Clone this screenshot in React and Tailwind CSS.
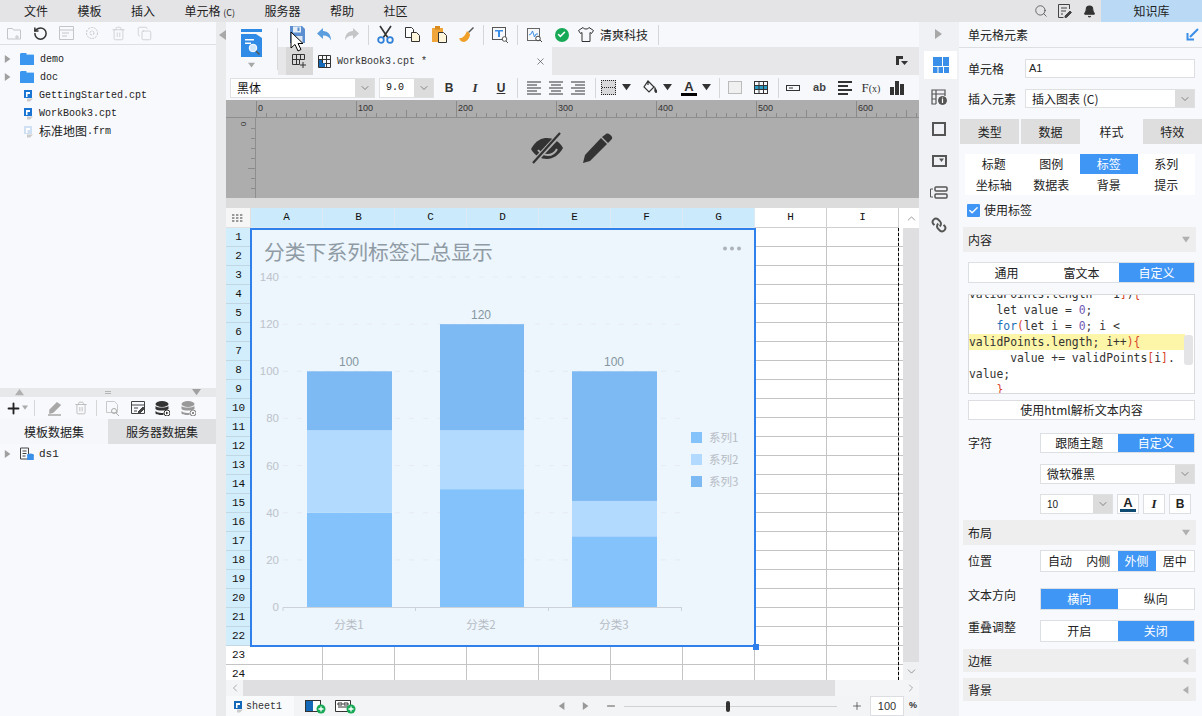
import { ChevronDown, ChevronLeft, ChevronRight, ChevronUp, Search, Bell, RotateCw, Plus, Minus, X, Trash2, Copy, Check } from 'lucide-react';

const MONO = "font-['Liberation_Mono',monospace]";

function Tri({ dir = 'down', color = '#9a9a9a', size = 6 }) {
  const pts = { down: '0,1 10,1 5,8', up: '0,8 10,8 5,1', left: '8,0 8,10 1,5', right: '1,0 1,10 8,5' };
  return (
    <svg width={size + 2} height={size + 2} viewBox="0 0 10 10" className="shrink-0">
      <polygon points={pts[dir]} fill={color} />
    </svg>
  );
}

function Sep({ h = 'h-[20px]' }) {
  return <div className={`w-px ${h} bg-[#d5d6d8] shrink-0`} />;
}

function Tool({ w = 'w-[27px]', children, className = '' }) {
  return <div className={`${w} h-full flex items-center justify-center shrink-0 ${className}`}>{children}</div>;
}

function Floppy() {
  return (
    <svg width="17" height="19" viewBox="0 0 17 19">
      <path d="M1 1h12l3 3v14H1z" fill="#5b8fd0" />
      <rect x="4" y="1.5" width="8" height="6" fill="#e8eef6" />
      <rect x="8.5" y="2.5" width="2" height="3.5" fill="#5b8fd0" />
      <rect x="3.5" y="11" width="10" height="7" fill="#dfe7f2" />
    </svg>
  );
}

function Undo({ flip, color }) {
  return (
    <svg width="17" height="15" viewBox="0 0 17 15" style={flip ? { transform: 'scaleX(-1)' } : undefined}>
      <path d="M7 1L1 6.5 7 12V8.5c4 0 6.5 1.5 8 5 0-6-3-9.5-8-9.5z" fill={color} />
    </svg>
  );
}

function Cut() {
  return (
    <svg width="17" height="19" viewBox="0 0 17 19">
      <path d="M3 1l8 12M14 1L6 13" stroke="#333" strokeWidth="1.6" fill="none" />
      <circle cx="4" cy="15" r="2.8" fill="none" stroke="#2f80d8" strokeWidth="1.8" />
      <circle cx="13" cy="15" r="2.8" fill="none" stroke="#2f80d8" strokeWidth="1.8" />
    </svg>
  );
}

function CopyDoc() {
  return (
    <svg width="17" height="17" viewBox="0 0 17 17">
      <path d="M1.5 1.5h6l2 2v8h-8z" fill="#fff" stroke="#333" />
      <path d="M7.5 6.5h5l3 3v6h-8z" fill="#fff6dc" stroke="#333" />
    </svg>
  );
}

function Paste() {
  return (
    <svg width="17" height="19" viewBox="0 0 17 19">
      <rect x="1" y="3" width="11" height="14" fill="#f0a63a" />
      <rect x="4" y="1" width="5" height="3.5" fill="#d88a1c" />
      <path d="M7.5 7.5h5l3 3v7h-8z" fill="#fff6dc" stroke="#333" />
    </svg>
  );
}

function Brush() {
  return (
    <svg width="17" height="17" viewBox="0 0 17 17">
      <path d="M10 6l5-5 1 1-5 5z" fill="#555" />
      <path d="M9 5l3 3c0 3-2 7-6 8-2 0-4-1-5-4 3 1 6-2 8-7z" fill="#f0a028" />
    </svg>
  );
}

function TextSearch() {
  return (
    <svg width="17" height="16" viewBox="0 0 17 16">
      <rect x=".5" y=".5" width="13" height="12" fill="none" stroke="#555" />
      <path d="M3 3h8v1.5H8V10H6V4.5H3z" fill="#3a8ee6" />
      <circle cx="12.5" cy="12" r="2.3" fill="#fff" stroke="#555" />
      <path d="M14 14l2 2" stroke="#555" />
    </svg>
  );
}

function ChartSearch() {
  return (
    <svg width="16" height="16" viewBox="0 0 16 16">
      <rect x=".5" y="1.5" width="12" height="12" fill="none" stroke="#666" />
      <path d="M2 8l2-1 1.5-3 2 6 1.5-3h2" fill="none" stroke="#3a8ee6" />
      <circle cx="11" cy="11.5" r="2.3" fill="#fff" stroke="#444" />
      <path d="M13 13l2 2" stroke="#444" />
    </svg>
  );
}

function GridPlus() {
  return (
    <svg width="15" height="15" viewBox="0 0 15 15" fill="none" stroke="#333">
      <path d="M.5 .5h12v5h-5v5h-7zM.5 5.5h7M4.5 .5v10M8.5 .5v5" />
      <path d="M11 8v6M8 11h6" />
    </svg>
  );
}

function Workbook({ size = 13 }) {
  return (
    <svg width={size} height={size} viewBox="0 0 13 13" fill="none">
      <path d="M.5 .5h12v12H.5zM.5 4.5h12M.5 8.5h12M4.5 .5v12M8.5 .5v12" stroke="#333" />
      <path d="M1 5h3v3h3v4H1z" fill="#1469b8" />
    </svg>
  );
}

function FileBadge({ color = '#1a76d2' }) {
  return (
    <svg width="11" height="13" viewBox="0 0 11 13" className="shrink-0">
      <path d="M1 1h8v8H1z" fill={color} />
      <rect x="3" y="3" width="4" height="2" fill="#fff" />
      <rect x="3" y="5" width="1.5" height="3" fill="#fff" />
      <path d="M4 9.5h6L7 12.5H4z" fill="#ccc" />
    </svg>
  );
}

function Folder() {
  return (
    <svg width="14" height="12" viewBox="0 0 14 12">
      <path d="M0 1.5C0 .7.7 0 1.5 0H6l1 1.2h5.5c.8 0 1.5.6 1.5 1.3V12H0z" fill="#3a96ee" />
      <path d="M6.5 1.2h7v.8h-7z" fill="#bcdcf8" />
    </svg>
  );
}

function AlignIcon({ kind }) {
  const lines = {
    left: 'M0 1h14M0 4h10M0 7h14M0 10h10M0 13h14',
    center: 'M0 1h14M2 4h10M0 7h14M2 10h10M0 13h14',
    right: 'M0 1h14M4 4h10M0 7h14M4 10h10M0 13h14',
  };
  return (
    <svg width="14" height="14" viewBox="0 0 14 14">
      <path d={lines[kind]} stroke="#333" fill="none" />
    </svg>
  );
}

function Logo() {
  return (
    <svg width="21" height="28" viewBox="0 0 21 28">
      <rect width="21" height="3" fill="#2f8be6" />
      <path d="M0 5h15l6 4v19H0z" fill="#2f8be6" />
      <path d="M4 10h9v1.5H4zM4 13.500h6V15H4z" fill="#fff" />
      <circle cx="12" cy="19" r="3.800" fill="#cfe6fb" stroke="#fff" />
      <path d="M15 22l3.500 3.500" stroke="#555" strokeWidth="1.5" />
    </svg>
  );
}

function FontSelect({ w, text, btn = 'w-[19px]', className = '' }) {
  return (
    <div className={`${w} h-full flex bg-white border border-[#dfe0e2] shrink-0`}>
      <div className={`flex-1 flex items-center pl-[6px] ${className}`}>{text}</div>
      <div className={`${btn} bg-[#dcdcdd] flex items-center justify-center`}>
        <ChevronDown size={12} strokeWidth={1.2} color="#444" />
      </div>
    </div>
  );
}

function Segment({ items, active, w = 'w-[155px]', cols }) {
  return (
    <div className={`${w} h-full grid ${cols} bg-white border border-[#dcdfe3] text-[12px] shrink-0`}>
      {items.map((t, i) => (
        <div
          key={t}
          className={`flex items-center justify-center ${i === active ? 'bg-[#3f96f5] text-white' : 'text-[#222]'}`}
        >
          {t}
        </div>
      ))}
    </div>
  );
}

function Section({ title, open, h = 'h-[25px]', mt }) {
  return (
    <div className={`${mt} ${h} ml-[4px] mr-[6px] bg-[#eeeeef] flex items-center justify-between pl-[5px] pr-[6px] text-[12px] text-[#222]`}>
      <span>{title}</span>
      <Tri dir={open ? 'down' : 'left'} color="#b0b0b0" size={6} />
    </div>
  );
}

function TreeRow({ arrow, icon, children }) {
  return (
    <div className="h-[18px] flex items-center text-[#222]">
      <div className="w-[20px] pl-[4px] flex items-center">{arrow && <Tri dir="right" color="#a0a0a0" size={6} />}</div>
      {icon}
      <span className={`ml-[6px] text-[10px] ${MONO}`}>{children}</span>
    </div>
  );
}

function Ruler() {
  const ticks = [];
  for (let x = 256; x < 919; x += 10) {
    const off = x - 256;
    const len = off % 100 === 0 ? 16 : off % 50 === 0 ? 7 : 4;
    ticks.push(<line key={x} x1={x + 0.5} x2={x + 0.5} y1={117 - len} y2={117} stroke="#8a8a8a" />);
  }
  return (
    <svg viewBox="226 100 693 18" className="w-[693px] h-[18px] block shrink-0">
      {ticks}
      <line x1="226" x2="919" y1="117.5" y2="117.5" stroke="#8e8e8e" />
      {[0, 100, 200, 300, 400, 500, 600].map((v) => (
        <text key={v} x={258 + v} y="111" fontSize="9" fill="#333" fontFamily="Liberation Sans, sans-serif">
          {v}
        </text>
      ))}
    </svg>
  );
}

function VRuler() {
  return (
    <svg viewBox="0 0 16 80" className="w-[16px] h-[80px] block shrink-0">
      <line x1="15.5" x2="15.5" y1="0" y2="80" stroke="#8e8e8e" />
      {[10, 20, 30, 40, 50, 60, 70].map((y) => (
        <line key={y} x1={y === 50 ? 8 : 11} x2="15" y1={y + 0.5} y2={y + 0.5} stroke="#8a8a8a" />
      ))}
      <text x="6" y="6" fontSize="8" fill="#333" transform="rotate(-90 6 6)" textAnchor="middle" fontFamily="Liberation Sans, sans-serif">
        0
      </text>
    </svg>
  );
}

function Chart() {
  const yAt = (v) => 607 - v * 2.357;
  const bars = [
    { x: 307, w: 85, parts: [40, 75, 100], label: '分类1', cx: 349 },
    { x: 440, w: 84, parts: [50, 75, 120], label: '分类2', cx: 481 },
    { x: 572, w: 85, parts: [30, 45, 100], label: '分类3', cx: 614 },
  ];
  const colors = ['#84c2fb', '#b2d9fe', '#7db9f2'];
  const font = 'Noto Sans CJK SC, Liberation Sans, sans-serif';
  return (
    <svg viewBox="250 228 506 419" className="w-full h-full block" fontFamily={font}>
      <text x="264" y="260" fontSize="20.8" fill="#8f9ba4">
        分类下系列标签汇总显示
      </text>
      {[724, 731, 738].map((x) => (
        <circle key={x} cx={x + 1} cy="248.5" r="2" fill="#adb3b9" />
      ))}
      {[20, 40, 60, 80, 100, 120, 140].map((v) => (
        <line key={v} x1="283" x2="680" y1={yAt(v)} y2={yAt(v)} stroke="#e7ecf1" strokeDasharray="5 9" />
      ))}
      {[0, 20, 40, 60, 80, 100, 120, 140].map((v) => (
        <text key={v} x="279" y={yAt(v) + 4} textAnchor="end" fontSize="11.5" fill="#bcc3ca" fontFamily="Liberation Sans, sans-serif">
          {v}
        </text>
      ))}
      {bars.map((b) => {
        let prev = 0;
        return (
          <g key={b.x}>
            {b.parts.map((p, i) => {
              const r = <rect key={p} x={b.x} y={yAt(p)} width={b.w} height={yAt(prev) - yAt(p)} fill={colors[i]} />;
              prev = p;
              return r;
            })}
            <text x={b.cx} y={yAt(b.parts[2]) - 5} textAnchor="middle" fontSize="12" fill="#84979f" fontFamily="Liberation Sans, sans-serif">
              {b.parts[2]}
            </text>
            <text x={b.cx} y="629" textAnchor="middle" fontSize="11.5" fill="#b5bcc3">
              {b.label}
            </text>
          </g>
        );
      })}
      <path d="M283 611V607.5H682M415.5 607.5V611M548.5 607.5V611M681.5 607.5V611" fill="none" stroke="#ccd2d8" />
      {['系列1', '系列2', '系列3'].map((t, i) => (
        <g key={t}>
          <rect x="691" y={432 + i * 22} width="11" height="11" fill={colors[i]} />
          <text x="709" y={442 + i * 22} fontSize="11.5" fill="#b5bcc3">
            {t}
          </text>
        </g>
      ))}
    </svg>
  );
}

function Grid() {
  const rows = Array.from({ length: 24 }, (_, i) => i + 1);
  const cols = ['A', 'B', 'C', 'D', 'E', 'F', 'G', 'H', 'I'];
  return (
    <div className="relative flex-1 h-full overflow-hidden bg-white">
      <div className="flex h-[20px]">
        <div className="w-[25px] bg-[#f6f6f7] border-r border-b border-[#e0e0e0] flex items-center justify-center shrink-0">
          <svg width="12" height="10" viewBox="0 0 12 10" fill="#9a9a9a">
            {[0, 4, 8].map((x) => [1, 4, 7].map((y) => <rect key={`${x}${y}`} x={x} y={y} width="2.4" height="2" />))}
          </svg>
        </div>
        {cols.map((c, i) => (
          <div
            key={c}
            className={`w-[72px] shrink-0 flex items-center justify-center text-[11px] text-[#111] border-r border-b ${MONO} ${
              i < 7 ? 'bg-[#cbebfc] border-[#dbeaf3]' : 'bg-white border-[#cfcfcf]'
            }`}
          >
            {c}
          </div>
        ))}
      </div>
      {rows.map((r) => (
        <div key={r} className="flex h-[19px]">
          <div
            className={`w-[25px] shrink-0 flex items-center justify-center text-[11px] text-[#111] border-b ${MONO} ${
              r <= 22 ? 'bg-[#d2edfc] border-[#c2d7e4]' : 'bg-white border-[#c4c4c4]'
            }`}
          >
            {r}
          </div>
          {cols.map((c) => (
            <div key={c} className="w-[72px] h-full shrink-0 border-r border-b border-[#c4c4c4] bg-white" />
          ))}
          <div className="w-[4px] h-full shrink-0 border-b border-[#c4c4c4] bg-white" />
        </div>
      ))}
      <div className="absolute left-[672px] top-[20px] bottom-0 w-0 border-l border-dashed border-black" />
      <div className="absolute left-[24px] top-[20px] w-[506px] h-[419px] bg-[#edf5fd] border-[2.5px] border-[#2f80ea]">
        <div className="-m-[2.5px] w-[506px] h-[419px]">
          <Chart />
        </div>
        <div className="absolute -right-[5px] -bottom-[5px] w-[6px] h-[6px] bg-[#2f80ea]" />
      </div>
    </div>
  );
}

function CodeBox() {
  const kw = 'text-[#1c6fb8]';
  const red = 'text-[#d9472b]';
  const num = 'text-[#7159b5]';
  return (
    <div className="relative mt-[11px] mx-[9px] w-[227px] h-[100px] bg-white border border-[#d8dade] overflow-hidden">
      <div className="-mt-[9px] font-['DejaVu_Sans_Mono',monospace] text-[11.4px] leading-[16px] text-[#333] whitespace-pre">
        <div>
          validPoints.length - 1<span className={red}>]</span>)<span className={red}>{'{'}</span>
        </div>
        <div>
          {'    let value = '}
          <span className={num}>0</span>;
        </div>
        <div>
          {'    '}
          <span className={kw}>for</span>
          <span className={red}>(</span>let i = <span className={num}>0</span>; i &lt;
        </div>
        <div className="bg-[#fdf5a8] w-[216px]">
          validPoints.length; i++<span className={red}>)</span>
          <span className={red}>{'{'}</span>
        </div>
        <div>
          {'      value += validPoints'}
          <span className={red}>[</span>i<span className={red}>]</span>.
        </div>
        <div>value;</div>
        <div className={red}>{'    }'}</div>
      </div>
      <div className="absolute right-[1px] top-[40px] w-[9px] h-[30px] rounded-[3px] bg-[#e4e4e6]" />
    </div>
  );
}

function RightPanel() {
  return (
    <div className="w-[243px] h-full bg-[#f8f9fc] text-[12px] text-[#222] flex flex-col">
      <div className="h-[26px] shrink-0 flex items-center justify-between pl-[9px] pr-[3px] border-b border-[#dddfe2]">
        <span>单元格元素</span>
        <svg width="13" height="13" viewBox="0 0 13 13">
          <path d="M12 1L4 9M1.5 5v6.5H8" stroke="#3a8fe8" strokeWidth="2" fill="none" />
        </svg>
      </div>
      <div className="mt-[11px] h-[19px] flex items-center pl-[9px]">
        <span className="w-[57px]">单元格</span>
        <div className="w-[170px] h-full bg-white border border-[#dcdee2] flex items-center pl-[3px] font-['Liberation_Sans',sans-serif] text-[11px]">
          A1
        </div>
      </div>
      <div className="mt-[11px] h-[19px] flex items-center pl-[9px]">
        <span className="w-[57px]">插入元素</span>
        <FontSelect w="w-[170px]" text={<span>插入图表 (C)</span>} className="text-[12px]" />
      </div>
      <div className="mt-[11px] h-[25px] ml-[1px] grid grid-cols-4 gap-[1.5px] shrink-0 text-[12px]">
        <div className="bg-[#dedede] flex items-center justify-center">类型</div>
        <div className="bg-[#dedede] flex items-center justify-center">数据</div>
        <div className="flex items-center justify-center">样式</div>
        <div className="bg-[#dedede] flex items-center justify-center">特效</div>
      </div>
      <div className="mt-[10px] ml-[6px] w-[230px] grid grid-cols-4 grid-rows-[20px_21px] bg-white shrink-0">
        {['标题', '图例', '标签', '系列', '坐标轴', '数据表', '背景', '提示'].map((t) => (
          <div key={t} className={`flex items-center justify-center ${t === '标签' ? 'bg-[#3f96f5] text-white' : ''}`}>
            {t}
          </div>
        ))}
      </div>
      <div className="mt-[7px] h-[16px] flex items-center pl-[8px]">
        <div className="w-[13px] h-[13px] bg-[#3f96f5] flex items-center justify-center rounded-[1px]">
          <Check size={11} color="#fff" strokeWidth={3} />
        </div>
        <span className="ml-[4px]">使用标签</span>
      </div>
      <Section title="内容" open mt="mt-[9px]" />
      <div className="mt-[10px] ml-[9px] h-[21px]">
        <Segment items={['通用', '富文本', '自定义']} active={2} w="w-[227px]" cols="grid-cols-3" />
      </div>
      <CodeBox />
      <div className="mt-[6px] mx-[9px] w-[227px] h-[20px] bg-white border border-[#dcdee2] flex items-center justify-center">
        使用html解析文本内容
      </div>
      <div className="mt-[13px] h-[20px] pl-[9px] flex items-center">
        <span className="w-[72px]">字符</span>
        <Segment items={['跟随主题', '自定义']} active={1} cols="grid-cols-2" />
      </div>
      <div className="mt-[11px] h-[20px] pl-[81px] flex">
        <FontSelect w="w-[155px]" text="微软雅黑" />
      </div>
      <div className="mt-[10px] h-[20px] pl-[81px] flex items-center">
        <FontSelect w="w-[73px]" text="10" className="text-[10px] font-['Liberation_Sans',sans-serif]" />
        <div className="ml-[4px] w-[22px] h-[20px] bg-white border border-[#dcdee2] flex flex-col items-center justify-center">
          <span className="font-['Liberation_Sans',sans-serif] font-bold text-[13px] leading-[12px]">A</span>
          <div className="w-[16px] h-[3px] bg-[#0f4a73]" />
        </div>
        <div className="ml-[4px] w-[22px] h-[20px] bg-white border border-[#dcdee2] flex items-center justify-center font-['Liberation_Serif',serif] italic font-bold text-[13px]">
          I
        </div>
        <div className="ml-[4px] w-[22px] h-[20px] bg-white border border-[#dcdee2] flex items-center justify-center font-['Liberation_Sans',sans-serif] font-bold text-[12px]">
          B
        </div>
      </div>
      <Section title="布局" open mt="mt-[6px]" />
      <div className="mt-[5px] h-[22px] pl-[9px] flex items-center">
        <span className="w-[72px]">位置</span>
        <Segment items={['自动', '内侧', '外侧', '居中']} active={2} cols="grid-cols-4" />
      </div>
      <div className="mt-[16px] h-[22px] pl-[9px] flex">
        <span className="w-[72px] -mt-[2px]">文本方向</span>
        <Segment items={['横向', '纵向']} active={0} cols="grid-cols-2" />
      </div>
      <div className="mt-[10px] h-[22px] pl-[9px] flex">
        <span className="w-[72px] -mt-[2px]">重叠调整</span>
        <Segment items={['开启', '关闭']} active={1} cols="grid-cols-2" />
      </div>
      <Section title="边框" h="h-[23px]" mt="mt-[7px]" />
      <Section title="背景" h="h-[23px]" mt="mt-[6px]" />
    </div>
  );
}

function Rail() {
  return (
    <div className="w-[40px] h-full bg-[#f0f1f4] flex flex-col items-center shrink-0">
      <div className="h-[24px] w-full flex items-center justify-center">
        <Tri dir="right" color="#a8a8a8" size={8} />
      </div>
      <div className="mt-[5px] ml-[3px] w-[33px] h-[28px] bg-white flex items-center justify-center">
        <svg width="16" height="16" viewBox="0 0 16 16" fill="#3a8fe8">
          <path d="M0 0h9v9H0zM10 0h6v9h-6zM0 10h4.500v6H0zM5.500 10H10v6H5.500zM11 10h5v6h-5z" />
        </svg>
      </div>
      <div className="mt-[9px] h-[17px] flex items-center">
        <svg width="16" height="16" viewBox="0 0 16 16" fill="none" stroke="#555">
          <path d="M5 15H1V1h13v6M1 5h13M5 1v14M1 10h4" strokeWidth="1.2" />
          <circle cx="11.500" cy="11.500" r="4" fill="#555" />
          <path d="M11.500 10v4M11.500 8.600v.8" stroke="#fff" strokeWidth="1.2" />
        </svg>
      </div>
      <div className="mt-[16px] h-[15px] flex items-center">
        <div className="w-[14px] h-[14px] border-2 border-[#555]" />
      </div>
      <div className="mt-[17px] h-[15px] flex items-center">
        <div className="w-[15px] h-[12px] border-2 border-[#555] flex items-start justify-end pr-[1px] pt-[1px]">
          <Tri color="#555" size={3} />
        </div>
      </div>
      <div className="mt-[17px] h-[15px] flex items-center">
        <svg width="18" height="13" viewBox="0 0 18 13" fill="none" stroke="#555">
          <rect x="5" y="1" width="12" height="4" rx="1" strokeWidth="1.5" />
          <rect x="5" y="8" width="12" height="4" rx="1" strokeWidth="1.5" />
          <path d="M3 3H.5v8H3" />
        </svg>
      </div>
      <div className="mt-[17px] h-[16px] flex items-center">
        <svg width="16" height="16" viewBox="0 0 24 24" fill="none" stroke="#555" strokeWidth="3" transform="rotate(90)">
          <path d="M10 13a5 5 0 0 0 7.500.5l3-3a5 5 0 0 0-7-7l-1.700 1.700M14 11a5 5 0 0 0-7.500-.5l-3 3a5 5 0 0 0 7 7l1.700-1.700" />
        </svg>
      </div>
    </div>
  );
}

function LeftPanel() {
  return (
    <div className="w-[216px] h-full bg-[#f8f9fc] flex flex-col shrink-0 text-[12px]">
      <div className="h-[23px] flex items-center pl-[7px] gap-[11px] border-b border-[#dedfe2] shrink-0">
        <svg width="15" height="13" viewBox="0 0 15 13" fill="none" stroke="#c4c5c8">
          <path d="M.5 12V1.500h5l1 1.500h7v9zM10 8v4M8 10h4" />
        </svg>
        <RotateCw size={15} color="#333" strokeWidth={2.4} style={{ transform: 'scaleX(-1)' }} />
        <svg width="15" height="14" viewBox="0 0 15 14" fill="none" stroke="#c4c5c8">
          <path d="M.5 .5h14v13H.5zM.5 4h14M3 7h7M3 10h5" />
        </svg>
        <svg width="15" height="14" viewBox="0 0 15 14" fill="none" stroke="#c4c5c8" strokeDasharray="2 1">
          <circle cx="7" cy="7" r="5.500" />
          <circle cx="7" cy="7" r="2" />
        </svg>
        <Trash2 size={15} color="#c6c7ca" strokeWidth={1.2} />
        <Copy size={15} color="#c6c7ca" strokeWidth={1.2} />
      </div>
      <div className="h-[343px] pt-[5px] shrink-0">
        <TreeRow arrow icon={<Folder />}>demo</TreeRow>
        <TreeRow arrow icon={<Folder />}>doc</TreeRow>
        <div className="h-[18px] flex items-center pl-[23px] text-[10px] text-[#222]">
          <FileBadge />
          <span className={`ml-[5px] ${MONO}`}>GettingStarted.cpt</span>
        </div>
        <div className="h-[18px] flex items-center pl-[23px] text-[10px] text-[#222]">
          <FileBadge />
          <span className={`ml-[5px] ${MONO}`}>WorkBook3.cpt</span>
        </div>
        <div className="h-[18px] flex items-center pl-[23px] text-[#222]">
          <FileBadge color="#cfe0f2" />
          <span className="ml-[5px]">标准地图</span>
          <span className={`text-[10px] ${MONO}`}>.frm</span>
        </div>
      </div>
      <div className="h-[9px] bg-[#e7e8ea] flex items-center justify-between pl-[15px] pr-[15px] shrink-0">
        <Tri dir="up" color="#b0b0b0" size={7} />
        <span className="h-[3px] w-[6px] border-y border-[#b5b5b5]" />
        <Tri color="#a0a0a0" size={7} />
      </div>
      <div className="h-[22px] flex items-center pl-[5px] shrink-0">
        <Plus size={17} strokeWidth={2.6} color="#222" />
        <Tri color="#aaa" size={4} />
        <div className="ml-[6px] mr-[12px]"><Sep h="h-[16px]" /></div>
        <svg width="15" height="15" viewBox="0 0 15 15" className="mr-[12px]">
          <path d="M3 9l7-7 3 2-7 7-3 1zM1 14h13" stroke="#a8a8a8" strokeWidth="1.5" fill="#a8a8a8" />
        </svg>
        <Trash2 size={14} color="#b0b0b0" strokeWidth={1.3} />
        <div className="ml-[8px] mr-[9px]"><Sep h="h-[16px]" /></div>
        <svg width="14" height="15" viewBox="0 0 14 15" fill="none" stroke="#c8c8c8" className="mr-[11px]">
          <path d="M.5 .5h8l3 3v8H.5z" />
          <circle cx="8" cy="10" r="2.500" stroke="#aaa" />
          <path d="M10 12l3 3" stroke="#aaa" />
        </svg>
        <svg width="15" height="14" viewBox="0 0 15 14" fill="none" stroke="#444" className="mr-[9px]">
          <path d="M.5 .5h13v12H.5zM.5 4h13M3 7h4M3 10h3" />
          <path d="M7 11l5-5 1.500 1.500L8.500 12.500z" fill="#444" />
        </svg>
        <svg width="15" height="15" viewBox="0 0 15 15" className="mr-[11px]">
          <ellipse cx="7" cy="3" rx="6.500" ry="3" fill="#333" />
          <path d="M.5 5c2 2 10 2 13 0v3c-3 2-11 2-13 0zM.5 10c2 2 6 2 8 2v2c-3 0-7 0-8-1.500z" fill="#333" />
          <circle cx="12" cy="12" r="3" fill="#fff" stroke="#333" />
          <path d="M11 10.500l2.500 1.500-2.500 1.500z" fill="#333" />
        </svg>
        <svg width="15" height="15" viewBox="0 0 15 15">
          <ellipse cx="7" cy="3" rx="6.500" ry="3" fill="#999" />
          <path d="M.5 5c2 2 10 2 13 0v3c-3 2-11 2-13 0zM.5 10c2 2 6 2 8 2v2c-3 0-7 0-8-1.500z" fill="#999" />
          <circle cx="12" cy="12" r="3" fill="#fff" stroke="#888" />
          <path d="M10.700 10.700l2.600 2.600M13.300 10.700l-2.600 2.600" stroke="#888" />
        </svg>
      </div>
      <div className="h-[25px] flex shrink-0 text-[#222]">
        <div className="w-[108px] flex items-center justify-center bg-[#f5f7fb]">模板数据集</div>
        <div className="w-[108px] flex items-center justify-center bg-[#dfe0e2]">服务器数据集</div>
      </div>
      <div className="mt-[1px]">
        <div className="h-[18px] flex items-center text-[#222]">
          <div className="w-[20px] pl-[4px] flex items-center"><Tri dir="right" color="#a0a0a0" size={6} /></div>
          <svg width="14" height="14" viewBox="0 0 14 14">
            <path d="M.5 1h8v11H.5zM2.500 4h4M2.500 6.500h4M2.500 9h3" fill="none" stroke="#444" />
            <ellipse cx="10.500" cy="8" rx="3.300" ry="1.500" fill="#3a8fe8" />
            <rect x="7.200" y="8" width="6.600" height="5" fill="#3a8fe8" />
          </svg>
          <span className={`ml-[5px] text-[11px] ${MONO}`}>ds1</span>
        </div>
      </div>
    </div>
  );
}

function Center() {
  return (
    <div className="w-[693px] h-full flex flex-col shrink-0">
      <div className="h-[53px] flex shrink-0 bg-[#f7f8fb]">
        <div className="w-[51px] h-full flex flex-col items-center pt-[7px]">
          <Logo />
          <div className="mt-[5px]"><Tri color="#a8a8a8" size={5} /></div>
        </div>
        <div className="w-px h-[42px] mt-[6px] bg-[#d8d9db]" />
        <div className="flex-1 flex flex-col">
          <div className="h-[25px] flex items-center pl-[6px] text-[12px] text-[#222]">
            <Tool><Floppy /></Tool>
            <Tool><Undo color="#5b9ee0" /></Tool>
            <Tool><Undo flip color="#c4c5c7" /></Tool>
            <div className="w-[3px]" />
            <Sep />
            <div className="w-[3px]" />
            <Tool><Cut /></Tool>
            <Tool><CopyDoc /></Tool>
            <Tool><Paste /></Tool>
            <Tool><Brush /></Tool>
            <div className="w-[3px]" />
            <Sep />
            <Tool w="w-[33px]"><TextSearch /></Tool>
            <Sep />
            <Tool w="w-[33px]"><ChartSearch /></Tool>
            <Tool w="w-[21px]">
              <div className="w-[14px] h-[14px] rounded-full bg-[#18a957] flex items-center justify-center">
                <Check size={9} color="#fff" strokeWidth={4} />
              </div>
            </Tool>
            <Tool w="w-[28px]">
              <svg width="16" height="15" viewBox="0 0 16 15" fill="none" stroke="#333">
                <path d="M5 .5L.5 3.500 2.500 6.500 4 5.500v9h8v-9l1.500 1 2-3L11 .5c-.5 2-5.500 2-6 0z" />
              </svg>
            </Tool>
            <span className="w-[48px]">清爽科技</span>
            <div className="ml-[10px]"><Sep /></div>
          </div>
          <div className="h-[28px] flex bg-[#e7e7e9] pl-[8px]">
            <div className="w-[27px] bg-[#d9d9da] flex items-center justify-center"><GridPlus /></div>
            <div className="w-[239px] bg-[#f7f8fb] flex items-center pl-[5px]">
              <Workbook />
              <span className={`ml-[6px] flex-1 text-[10px] text-[#333] ${MONO}`}>WorkBook3.cpt *</span>
              <X size={11} color="#444" strokeWidth={1.4} className="mr-[6px]" />
            </div>
            <div className="flex-1 flex items-center justify-end pr-[11px]">
              <svg width="12" height="10" viewBox="0 0 12 10">
                <path d="M0 0h7v3H3v6H0z" fill="#333" />
                <path d="M5 5h7L8.500 9z" fill="#333" />
              </svg>
            </div>
          </div>
        </div>
      </div>
      <div className="h-[25px] bg-[#f7f8fb] flex items-center pl-[4px] shrink-0 text-[#333]">
        <div className="h-[20px] flex gap-[4px] text-[12px] text-[#111]">
          <FontSelect w="w-[145px]" text="黑体" />
          <FontSelect w="w-[55px]" text="9.0" className={`text-[10px] ${MONO}`} />
        </div>
        <div className="ml-[2px] flex h-full items-center">
          <Tool w="w-[26px]"><span className="font-['Liberation_Sans',sans-serif] font-bold text-[12px]">B</span></Tool>
          <Tool w="w-[26px]"><span className="font-['Liberation_Serif',serif] italic font-bold text-[13px]">I</span></Tool>
          <Tool w="w-[26px]"><span className="font-['Liberation_Sans',sans-serif] font-bold text-[12px] underline">U</span></Tool>
          <div className="w-[3px]" />
          <Sep />
          <div className="w-[5px]" />
          <Tool w="w-[22px]"><AlignIcon kind="left" /></Tool>
          <Tool w="w-[22px]"><AlignIcon kind="center" /></Tool>
          <Tool w="w-[22px]"><AlignIcon kind="right" /></Tool>
          <div className="w-[6px]" />
          <Sep />
          <div className="w-[5px]" />
          <div className="w-[15px] h-[15px] bg-[#d8d8da] border border-dotted border-[#222] flex items-center justify-center shrink-0">
            <div className="w-full h-0 border-t border-dotted border-[#222]" />
          </div>
          <div className="ml-[6px]"><Tri color="#333" size={7} /></div>
          <Tool w="w-[27px]" className="ml-[5px]">
            <svg width="16" height="16" viewBox="0 0 16 16" fill="none" stroke="#333" strokeWidth="1.2">
              <path d="M6 1l6 6-5 5-5-5zM6 1V5" />
              <path d="M13 8c1 2 2 3 1.500 4S12.500 12 13 8z" fill="#333" />
            </svg>
          </Tool>
          <Tri color="#333" size={7} />
          <div className="w-[9px] shrink-0" />
          <div className="flex flex-col items-center w-[16px] shrink-0">
            <span className="font-['Liberation_Sans',sans-serif] font-bold text-[13px] leading-[13px]">A</span>
            <div className="w-[16px] h-[3px] bg-black" />
          </div>
          <div className="ml-[5px]"><Tri color="#333" size={7} /></div>
          <div className="w-[8px]" />
          <Sep />
          <Tool w="w-[30px]">
            <div className="w-[14px] h-[13px] border border-[#bbb] bg-[#f0f0f0]" />
          </Tool>
          <Tool w="w-[22px]">
            <svg width="14" height="13" viewBox="0 0 14 13" fill="none" stroke="#333">
              <rect x=".5" y=".5" width="13" height="12" />
              <rect x="1" y="4" width="12" height="4" fill="#2a9bc2" stroke="none" />
              <path d="M.5 4.500h13M.5 8.500h13M5 .5v12M9.500 .5v12" />
            </svg>
          </Tool>
          <div className="w-[6px]" />
          <Sep />
          <Tool w="w-[28px]">
            <svg width="14" height="6" viewBox="0 0 14 6" fill="none" stroke="#333">
              <rect x=".5" y=".5" width="13" height="5" />
              <path d="M3 3h4" />
            </svg>
          </Tool>
          <Tool w="w-[25px]"><span className="font-['Liberation_Sans',sans-serif] font-bold text-[11px] text-[#444]">ab</span></Tool>
          <Tool w="w-[26px]">
            <svg width="14" height="14" viewBox="0 0 14 14" fill="#333">
              <path d="M0 0h14v2H0zM0 4h10v2H0zM0 8h14v2H0zM0 12h10v2H0z" />
            </svg>
          </Tool>
          <Tool w="w-[26px]"><span className="font-['Liberation_Serif',serif] text-[13px]">F<span className="text-[10px]">(x)</span></span></Tool>
          <Tool w="w-[26px]">
            <svg width="14" height="14" viewBox="0 0 14 14" fill="#333">
              <path d="M0 6h4v8H0zM5 0h4v14H5zM10 3h4v11h-4z" />
            </svg>
          </Tool>
        </div>
      </div>
      <div className="h-[98px] bg-[#adadae] flex flex-col shrink-0">
        <Ruler />
        <div className="flex flex-1 pl-[14px]">
          <VRuler />
          <div className="flex-1 flex items-start pl-[274px] pt-[14px] gap-[18px]">
            <svg width="34" height="32" viewBox="0 0 34 32">
              <path d="M1 17C6 8 12 6 17 6c6 0 12 3 16 10-4 7-10 11-16 11S5 24 1 17z" fill="#333" />
              <path d="M8 18c3 4 7 5 10 5s7-2 9-6" stroke="#adadae" strokeWidth="2" fill="none" />
              <path d="M31 1L3 31" stroke="#adadae" strokeWidth="5" />
              <path d="M30 1L3 31" stroke="#333" strokeWidth="2.2" />
            </svg>
            <svg width="31" height="32" viewBox="0 0 31 32">
              <path d="M24 2c2-1.500 5 1 6 3 .5 1 0 2-1 3l-3 3-6-6z" fill="#333" />
              <path d="M19 6l6 6L8 29 1 31l2-8z" fill="#333" />
            </svg>
          </div>
        </div>
      </div>
      <div className="h-[10px] bg-[#dcdcdd] shrink-0" />
      <div className="h-[472px] flex shrink-0">
        <Grid />
        <div className="w-[16px] h-full flex flex-col bg-[#f0f1f3] shrink-0">
          <div className="h-[20px] bg-white flex items-center justify-center">
            <ChevronUp size={13} color="#666" strokeWidth={1.2} />
          </div>
          <div className="h-[434px] bg-[#dfdfe2]" />
          <div className="flex-1 flex items-center justify-center">
            <ChevronDown size={13} color="#666" strokeWidth={1.2} />
          </div>
        </div>
      </div>
      <div className="h-[16px] flex items-center bg-[#f4f5f7] shrink-0">
        <div className="w-[17px] flex justify-center"><ChevronLeft size={12} color="#777" strokeWidth={1.2} /></div>
        <div className="w-[592px] h-full bg-[#dfdfe2]" />
        <div className="flex-1 flex justify-end pr-[2px]"><ChevronRight size={12} color="#777" strokeWidth={1.2} /></div>
      </div>
      <div className="flex-1 flex items-center bg-[#f3f4f6] text-[#333]">
        <div className="w-[68px] h-full bg-[#f9fafc] flex items-center pl-[7px] shrink-0">
          <FileBadge color="#1469b8" />
          <span className={`ml-[2px] text-[10px] ${MONO}`}>sheet1</span>
        </div>
        <div className="ml-[11px]">
          <svg width="22" height="15" viewBox="0 0 22 15">
            <rect x=".5" y="1.500" width="15" height="11" fill="#fff" stroke="#333" />
            <path d="M1 2h7v10H1z" fill="#1469b8" />
            <circle cx="16" cy="10" r="4.500" fill="#18a957" />
            <path d="M16 7.500v5M13.500 10h5" stroke="#fff" strokeWidth="1.300" />
          </svg>
        </div>
        <div className="ml-[8px]">
          <svg width="22" height="15" viewBox="0 0 22 15">
            <path d="M.5 1.500h15v11H.5zM3 4h4v2H3zM9 4h4v2H9zM3 8h10" fill="#fff" stroke="#333" />
            <circle cx="16" cy="10" r="4.500" fill="#18a957" />
            <path d="M16 7.500v5M13.500 10h5" stroke="#fff" strokeWidth="1.300" />
          </svg>
        </div>
        <div className="ml-[201px] flex items-center">
          <Tri dir="left" color="#999" size={6} />
          <div className="w-[16px]" />
          <Tri dir="right" color="#999" size={6} />
        </div>
        <Minus size={12} color="#333" className="ml-[15px]" strokeWidth={1.6} />
        <div className="ml-[7px] w-[213px] h-[1px] bg-[#d0d1d3] flex items-center pl-[102px]">
          <div className="w-[4px] h-[11px] rounded-[2px] bg-[#333]" />
        </div>
        <Plus size={12} color="#333" className="ml-[14px]" strokeWidth={1.4} />
        <div className="ml-[7px] w-[34px] h-[20px] bg-white border border-[#dcdee2] flex items-center justify-center text-[11px] font-['Liberation_Sans',sans-serif]">
          100
        </div>
        <span className="ml-[5px] text-[9px] font-['Liberation_Sans',sans-serif] font-bold">%</span>
      </div>
    </div>
  );
}

export default function App() {
  return (
    <div className="relative w-[1202px] h-[716px] overflow-hidden flex flex-col bg-[#f8f9fc] font-['Noto_Sans_CJK_SC','Liberation_Sans',sans-serif]">
      <div className="h-[22px] bg-[#e4e4e6] flex items-center pl-[24px] text-[12px] text-[#222] shrink-0">
        <div className="flex gap-[29.5px]">
          <span>文件</span>
          <span>模板</span>
          <span>插入</span>
          <span>单元格 <span className="text-[9px]">(C)</span></span>
          <span>服务器</span>
          <span>帮助</span>
          <span>社区</span>
        </div>
        <div className="ml-auto flex items-center h-full">
          <Search size={14} color="#444" strokeWidth={1.3} />
          <svg width="14" height="14" viewBox="0 0 14 14" fill="none" stroke="#444" className="ml-[10px]">
            <path d="M11.500 5V.5H.5v13h5M3 4h6M3 7h5M3 10h2" />
            <path d="M7 12l5-5 1.500 1.500-5 5H7z" fill="#444" />
          </svg>
          <Bell size={13} fill="#333" color="#333" className="ml-[11px]" />
          <div className="ml-[5px] w-[101px] h-full bg-[#b9d9f5] flex items-center justify-center">知识库</div>
        </div>
      </div>
      <div className="flex-1 flex min-h-0">
        <LeftPanel />
        <div className="w-[10px] h-full bg-[#eaebed] pt-[8px] pl-[2px] shrink-0">
          <Tri dir="left" color="#a8a8a8" size={8} />
        </div>
        <Center />
        <Rail />
        <RightPanel />
      </div>
      <svg width="15" height="22" viewBox="0 0 15 22" className="absolute left-[290px] top-[31px]">
        <path d="M1 1v16l4-3.500 3 6.500 3-1.500-3-6h5z" fill="#fff" stroke="#000" />
      </svg>
    </div>
  );
}
